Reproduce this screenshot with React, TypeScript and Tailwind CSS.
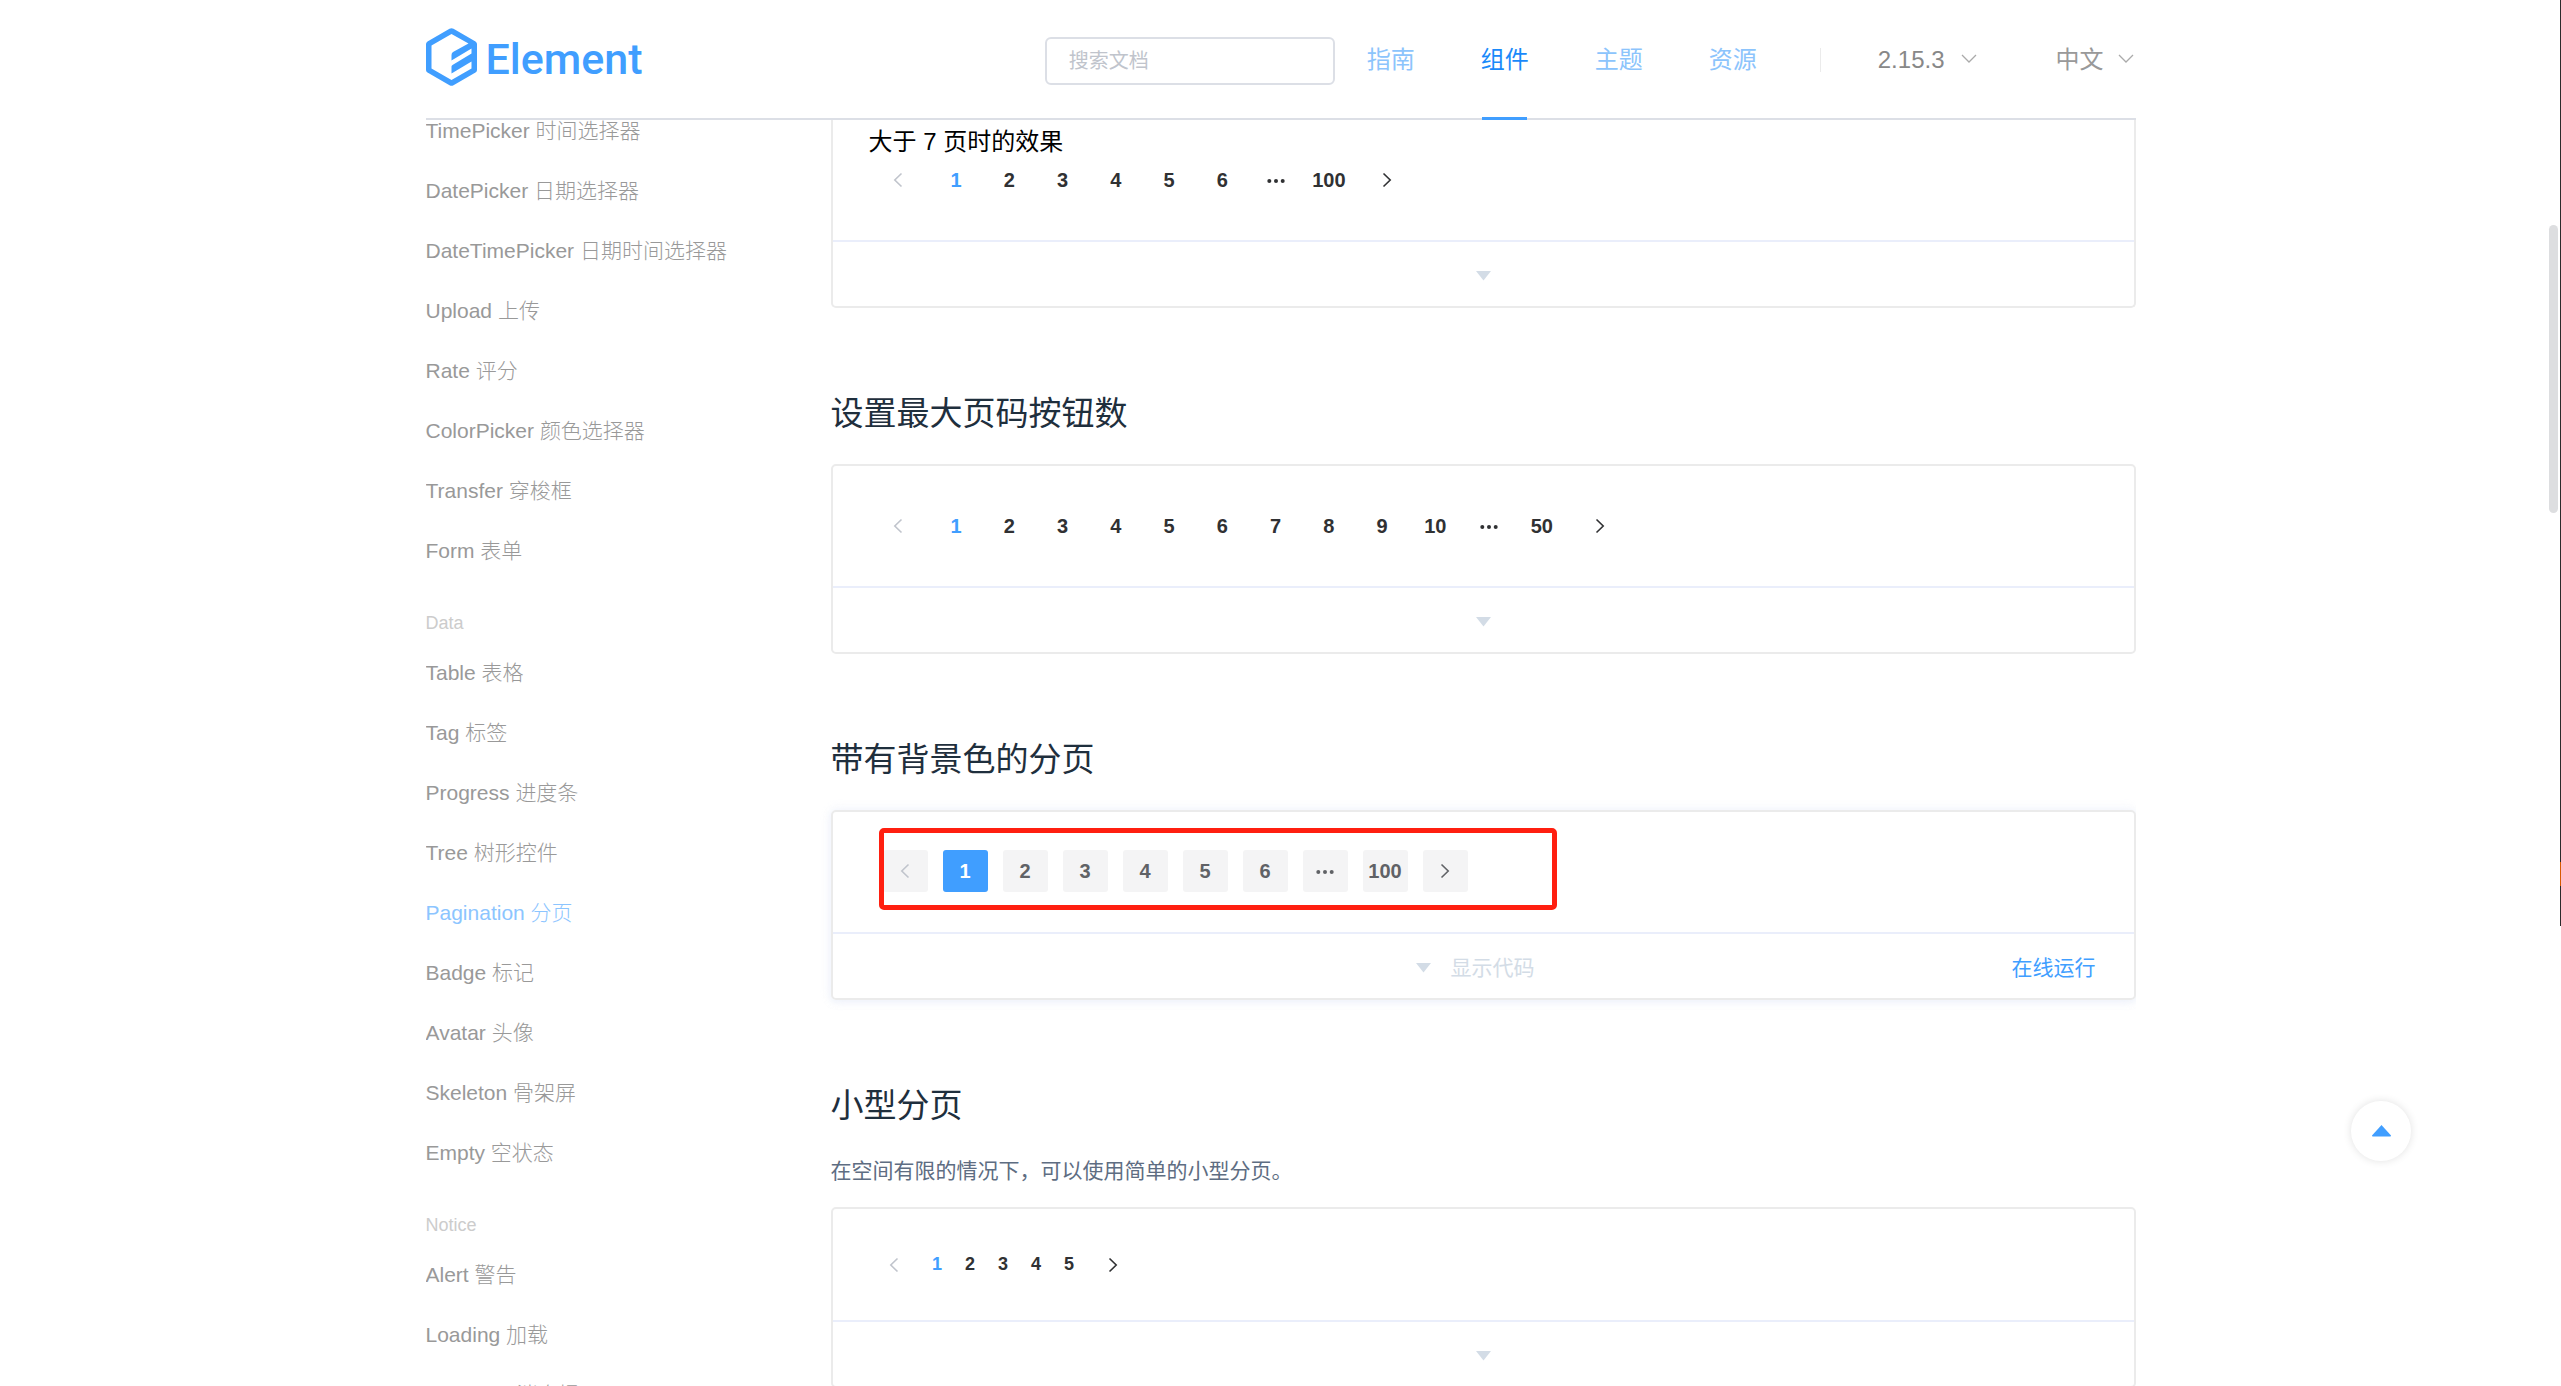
import { ReactNode, useState } from "react";
import clsx from "clsx";

interface NavItem {
  name: string;
  title: string;
}

interface NavGroup {
  label?: string;
  items: NavItem[];
}

const groups: NavGroup[] = [
  {
    items: [
      { name: "TimePicker", title: "时间选择器" },
      { name: "DatePicker", title: "日期选择器" },
      { name: "DateTimePicker", title: "日期时间选择器" },
      { name: "Upload", title: "上传" },
      { name: "Rate", title: "评分" },
      { name: "ColorPicker", title: "颜色选择器" },
      { name: "Transfer", title: "穿梭框" },
      { name: "Form", title: "表单" },
    ],
  },
  {
    label: "Data",
    items: [
      { name: "Table", title: "表格" },
      { name: "Tag", title: "标签" },
      { name: "Progress", title: "进度条" },
      { name: "Tree", title: "树形控件" },
      { name: "Pagination", title: "分页" },
      { name: "Badge", title: "标记" },
      { name: "Avatar", title: "头像" },
      { name: "Skeleton", title: "骨架屏" },
      { name: "Empty", title: "空状态" },
    ],
  },
  {
    label: "Notice",
    items: [
      { name: "Alert", title: "警告" },
      { name: "Loading", title: "加载" },
      { name: "Message", title: "消息提示" },
    ],
  },
];

const links = ["指南", "组件", "主题", "资源"];

function Logo() {
  return (
    <a href="#home" className="flex items-center gap-[9px] text-[#409eff]">
      <svg width="51" height="58" viewBox="0 0 51 58" fill="currentColor" aria-hidden="true">
        <path
          fillRule="evenodd"
          d="M23.500.8q2-1.200 4 0L49.500 13.500q1.500 1 1.500 2.500V42q0 1.600-1.500 2.500L27.500 57.200q-2 1.200-4 0L1.500 44.500Q0 43.600 0 42V16q0-1.500 1.500-2.500ZM25.500 6 5.500 17.500V40.500L25.500 52 45.500 40.500V33.500L25.500 45.500V38.500Q25.500 37.500 26.500 37L45.500 25.500V20.500L25.500 32.500V27Q25.500 25 27 24L42.500 15.500Z"
        />
      </svg>
      <span className="pt-1 font-['Roboto'] text-[43px] leading-[54px] font-medium">Element</span>
    </a>
  );
}

function Chevron({ dir }: { dir: "left" | "right" }) {
  return (
    <svg width="10" height="16" viewBox="0 0 10 16" fill="none" stroke="currentColor" strokeWidth="1.6" aria-hidden="true">
      <path d={dir === "left" ? "M8.500 1.500 1.800 8l6.700 6.500" : "M1.500 1.500 8.200 8l-6.700 6.500"} />
    </svg>
  );
}

function ChevronDown() {
  return (
    <svg width="16" height="9" viewBox="0 0 16 9" fill="none" stroke="#aaa" strokeWidth="1.3" className="-mt-1" aria-hidden="true">
      <path d="M1 1l7 7 7-7" />
    </svg>
  );
}

function More() {
  return (
    <svg width="18" height="6" viewBox="0 0 18 6" fill="currentColor" aria-label="更多">
      <circle cx="2.300" cy="4" r="2" />
      <circle cx="9" cy="4" r="2" />
      <circle cx="15.700" cy="4" r="2" />
    </svg>
  );
}

interface PaginationProps {
  pages: string[];
  // total width of the page numbers, each number gets an equal share
  width: string;
  small?: boolean;
}

function Pagination({ pages, width, small }: PaginationProps) {
  const [current, setCurrent] = useState("1");
  const edge = clsx("flex items-center justify-center", small ? "w-[44px]" : "w-[53px]");

  return (
    <nav className={clsx("flex items-stretch px-2 py-[3px] font-bold text-[#303133]", small ? "h-[39px] text-[18px]" : "h-12 text-[20px]")}>
      <button className={clsx(edge, "pr-[10px] text-[#c0c4cc]")} aria-label="上一页">
        <Chevron dir="left" />
      </button>
      <ul className={clsx("grid auto-cols-fr grid-flow-col", width)}>
        {pages.map((page) => (
          <li key={page} className="flex">
            <button onClick={() => setCurrent(page)} className={clsx("flex flex-1 items-center justify-center", page === current && "text-[#409eff]")}>
              {page === "more" ? <More /> : page}
            </button>
          </li>
        ))}
      </ul>
      <button className={clsx(edge, "pl-[10px]")} aria-label="下一页">
        <Chevron dir="right" />
      </button>
    </nav>
  );
}

function BackgroundPagination({ pages }: { pages: string[] }) {
  const [current, setCurrent] = useState("1");
  const cell = "flex h-[42px] w-[45px] items-center justify-center rounded-[3px]";

  return (
    <nav className="flex h-12 items-start gap-[15px] pt-[2px] pl-[14px] text-[20px] font-bold text-[#606266]">
      <button className={clsx(cell, "bg-[#f4f4f5] text-[#c0c4cc]")} aria-label="上一页">
        <Chevron dir="left" />
      </button>
      <ul className="flex gap-[15px]">
        {pages.map((page) => (
          <li key={page}>
            <button onClick={() => setCurrent(page)} className={clsx(cell, page === current ? "bg-[#409eff] text-white" : "bg-[#f4f4f5]")}>
              {page === "more" ? <More /> : page}
            </button>
          </li>
        ))}
      </ul>
      <button className={clsx(cell, "bg-[#f4f4f5]")} aria-label="下一页">
        <Chevron dir="right" />
      </button>
    </nav>
  );
}

function Triangle() {
  return (
    <svg width="15" height="10" viewBox="0 0 15 10" fill="#d3dce6" aria-hidden="true">
      <path d="M0 0h15L7.500 9.500Z" />
    </svg>
  );
}

interface DemoBlockProps {
  children: ReactNode;
  clipped?: boolean;
  hover?: boolean;
}

function DemoBlock({ children, clipped, hover }: DemoBlockProps) {
  return (
    <section
      className={clsx(
        "border-2 border-[#ebebeb]",
        clipped ? "rounded-b-[5px] border-t-0" : "rounded-[5px]",
        hover && "shadow-[0_0_12px_rgba(232,237,250,0.6),0_2px_6px_rgba(232,237,250,0.5)]"
      )}
    >
      <div className={clsx("px-9 pb-9", clipped ? "pt-2" : "pt-9")}>{children}</div>
      <div className="grid h-[66px] grid-cols-[1fr_auto_1fr] items-center border-t-2 border-[#eaeefb] pt-1">
        {hover ? (
          <>
            <button className="col-start-2 mr-4 flex items-center gap-5 text-[21px] leading-[32px] text-[#d3dce6]">
              <Triangle />
              显示代码
            </button>
            <a href="#run" className="justify-self-end pr-[38px] text-[21px] leading-[32px] text-[#409eff]">
              在线运行
            </a>
          </>
        ) : (
          <button className="col-start-2" aria-label="显示代码">
            <Triangle />
          </button>
        )}
      </div>
    </section>
  );
}

function Heading({ children }: { children: ReactNode }) {
  return <h3 className="mt-[84px] mb-[28px] text-[33px] leading-[44px] text-[#1f2f3d]">{children}</h3>;
}

function Header() {
  return (
    <header className="mx-auto w-full max-w-[1710px] shrink-0">
      <div className="flex h-[120px] items-stretch border-b-2 border-[#dcdfe6] pr-[2px] text-[24px]">
        <div className="flex items-center pb-1">
          <Logo />
        </div>
        <div className="ml-auto flex items-center pt-1">
          <input
            type="text"
            placeholder="搜索文档"
            aria-label="搜索文档"
            className="h-12 w-[290px] rounded-[6px] border-2 border-[#dcdfe6] px-[22px] text-[20px] text-[#606266] placeholder:text-[#c0c4cc]"
          />
        </div>
        <nav className="-mb-[2px] ml-8 flex gap-[66px]">
          {links.map((link) => (
            <a
              key={link}
              href={`#${link}`}
              className={clsx(
                "relative flex items-center",
                link === "组件"
                  ? "text-[#1989fa] after:absolute after:bottom-0 after:left-px after:h-[3px] after:w-[45px] after:bg-[#409eff]"
                  : "text-[#8cc4fc]"
              )}
            >
              {link}
            </a>
          ))}
        </nav>
        <div className="mt-[2px] ml-[63px] h-6 w-px self-center bg-[#ebebeb]" />
        <button className="ml-[57px] flex items-center gap-4 pt-[2px] text-[#888]">
          2.15.3
          <ChevronDown />
        </button>
        <button className="ml-[79px] flex items-center gap-[14px] pt-[2px] text-[#999]">
          中文
          <ChevronDown />
        </button>
      </div>
    </header>
  );
}

function SideNav() {
  return (
    <aside className="w-[405px] shrink-0 text-[21px] font-light text-[#999]">
      {groups.map((group, i) => (
        <div key={i}>
          {group.label && <div className="mt-[23px] text-[18px] leading-[39px] text-[#ccc]">{group.label}</div>}
          <ul className={clsx(i === 0 && "-mt-[19px]")}>
            {group.items.map((item) => (
              <li key={item.name}>
                <a href={`#${item.name}`} className={clsx("block h-[60px] leading-[60px]", item.name === "Pagination" && "text-[#8cc5ff]")}>
                  {item.name} {item.title}
                </a>
              </li>
            ))}
          </ul>
        </div>
      ))}
    </aside>
  );
}

export default function App() {
  return (
    <div className="relative flex h-screen flex-col overflow-hidden bg-white font-['Liberation_Sans','Noto_Sans_CJK_SC',sans-serif] text-black">
      <Header />

      <div className="mx-auto flex min-h-0 w-full max-w-[1710px] flex-1 overflow-hidden">
        <SideNav />
        <main className="min-w-0 flex-1">
          <DemoBlock clipped>
            <p className="text-[24px] leading-[28px]">大于 7 页时的效果</p>
            <Pagination pages={["1", "2", "3", "4", "5", "6", "more", "100"]} width="w-[426px]" />
          </DemoBlock>

          <Heading>设置最大页码按钮数</Heading>
          <DemoBlock>
            <Pagination pages={["1", "2", "3", "4", "5", "6", "7", "8", "9", "10", "more", "50"]} width="w-[639px]" />
          </DemoBlock>

          <Heading>带有背景色的分页</Heading>
          <DemoBlock hover>
            <div className="relative">
              <BackgroundPagination pages={["1", "2", "3", "4", "5", "6", "more", "100"]} />
              <div className="pointer-events-none absolute -top-5 left-[10px] h-[82px] w-[678px] rounded-[5px] border-[5px] border-[#ff1f10]" />
            </div>
          </DemoBlock>

          <Heading>小型分页</Heading>
          <p className="mb-[21px] text-[21px] leading-[30px] text-[#5e6d82]">在空间有限的情况下，可以使用简单的小型分页。</p>
          <DemoBlock>
            <Pagination pages={["1", "2", "3", "4", "5"]} width="w-[165px]" small />
          </DemoBlock>
        </main>
      </div>

      <button
        className="fixed right-[150px] bottom-[225px] flex size-[60px] items-center justify-center rounded-full bg-white shadow-[0_0_9px_rgba(0,0,0,0.12)]"
        aria-label="回到顶部"
      >
        <svg width="19" height="12" viewBox="0 0 19 12" fill="#409eff" aria-hidden="true">
          <path d="M9.500 0 19 10.500q0 1-.8 1H.8q-.8 0-.8-1Z" />
        </svg>
      </button>

      {/* scrollbar thumb and the window edge behind it */}
      <div className="absolute top-[225px] right-[3px] h-[288px] w-[9px] rounded-full bg-[#dddee0]" />
      <div className="absolute top-0 right-0 flex h-[926px] w-px flex-col bg-[#2b2b2b]">
        <div className="mt-[862px] h-6 bg-[#d75a00]" />
      </div>
    </div>
  );
}
